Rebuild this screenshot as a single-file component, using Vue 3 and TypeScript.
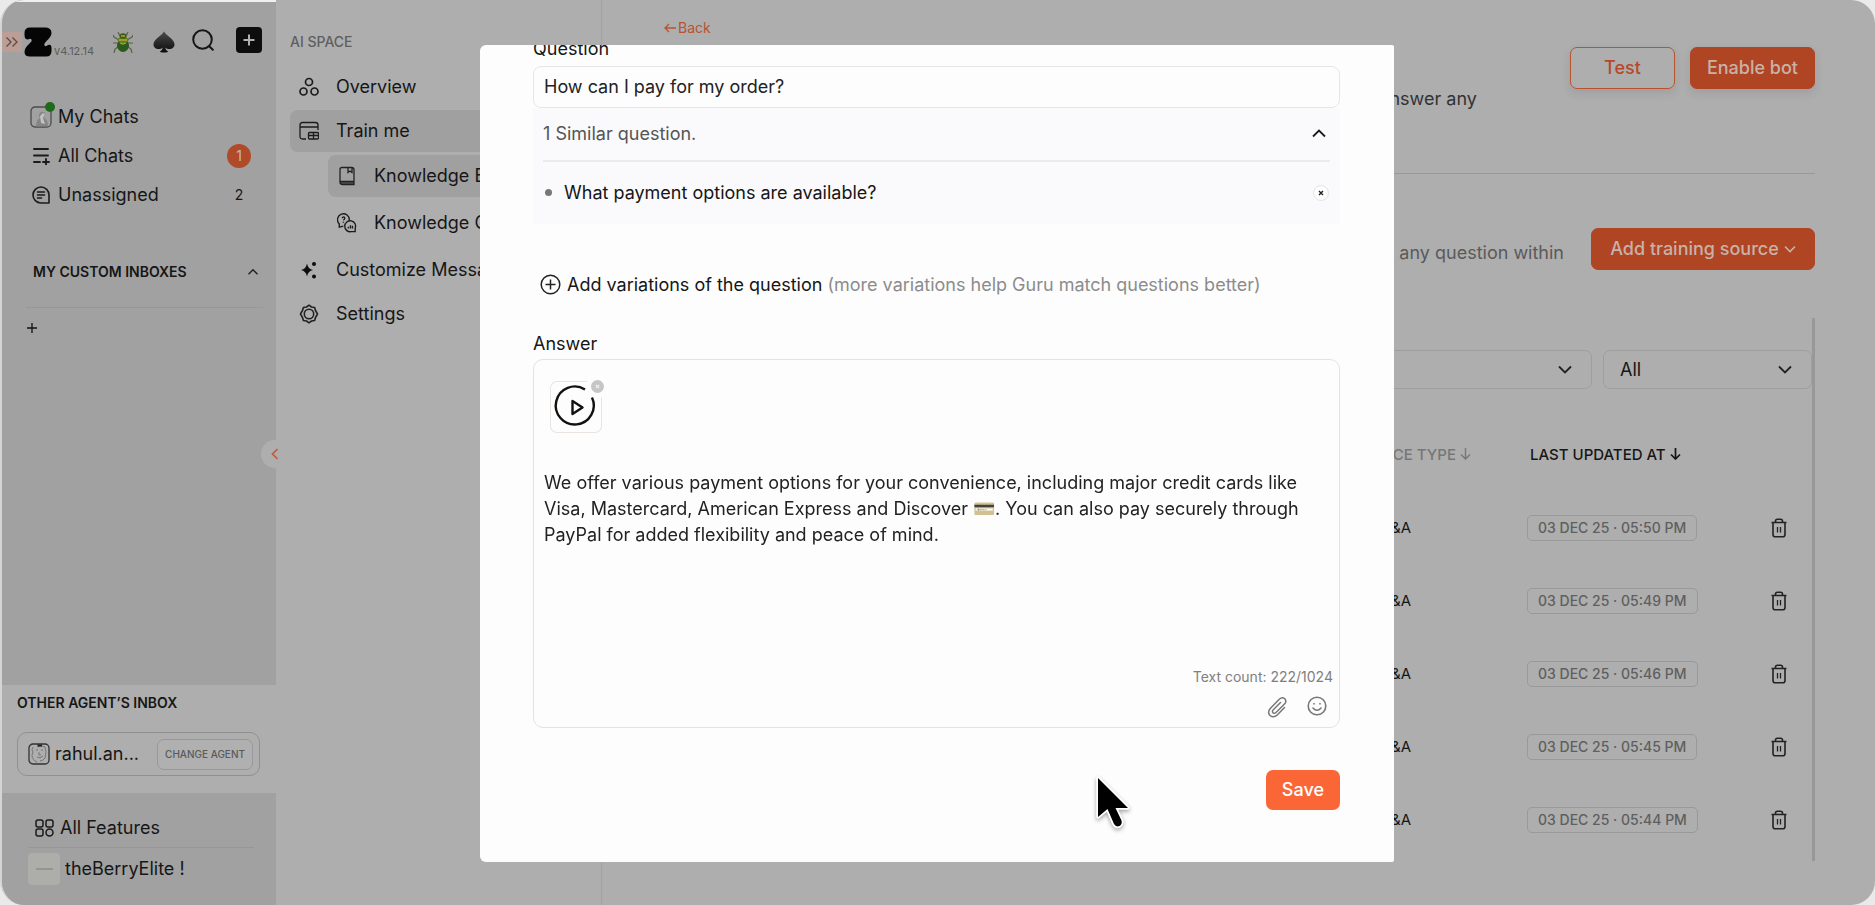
<script setup lang="ts">
import { ref } from 'vue'

const question = ref('How can I pay for my order?')
const answer = ref(
  'We offer various payment options for your convenience, including major credit cards like Visa, Mastercard, American Express and Discover 💳. You can also pay securely through PayPal for added flexibility and peace of mind.'
)
const rows: string[] = ['05:50', '05:49', '05:46', '05:45', '05:44']
</script>

<template>
  <div class="app">
    <aside class="sidebar">
      <header class="brand">
        <button class="expand" aria-label="Expand">
          <svg width="14" height="12" viewBox="0 0 14 12" fill="none" stroke="#5c4a46" stroke-width="1.3"><path d="M1.500 1.500l4.500 4.500-4.500 4.500M7.500 1.500l4.500 4.500-4.500 4.500" /></svg>
        </button>
        <svg class="logo" width="28" height="30" viewBox="0 0 28 30"><path d="M6 0.500H21Q27.500 0.500 27.500 6Q27.500 9.500 22.500 14Q19.500 17 20.500 18.500Q22 20 24 18Q27.500 17 27.500 21V24Q27.500 29.500 22 29.500H6Q0.500 29.500 0.500 25Q0.500 21 5 17Q8.500 14 7.500 12.500Q6 11 4 12.500Q0.500 12.500 0.500 8V6Q0.500 0.500 6 0.500Z" fill="#050505" /></svg>
        <span class="version">v4.12.14</span>
        <svg class="bug" width="20" height="22" viewBox="0 0 20 22">
          <path d="M7 5L5 1M13 5l2-4M6 9L1 6L0 4M14 9l5-3 1-2M5 12H0M15 12h5M6 15l-4 3-1 4M14 15l4 3 1 4" fill="none" stroke="#59604a" stroke-width="1.200" />
          <ellipse cx="10" cy="14.500" rx="6" ry="6.500" fill="#2b5a1d" />
          <ellipse cx="10" cy="9" rx="5.500" ry="3.200" fill="#5f7f23" />
          <ellipse cx="10" cy="5" rx="3.500" ry="2.700" fill="#3d5a18" />
          <path d="M6 9h8M8 5h4M7 12l3 1 3-1" stroke="#b3a52c" stroke-width="1.300" fill="none" />
        </svg>
        <svg class="spade" width="22" height="22" viewBox="0 0 22 22">
          <defs><linearGradient id="sp" x1="0" y1="0" x2="0" y2="1"><stop offset="0" stop-color="#4a4a4a" /><stop offset="1" stop-color="#0c0c0c" /></linearGradient></defs>
          <path d="M11 0.500C13 4.500 21.500 8 21.500 13.500C21.500 18 15.500 19.500 12.200 16.500Q12.500 19 15 20.500Q15 21.500 11 21.500Q7 21.500 7 20.500Q9.500 19 9.800 16.500C6.500 19.500 0.500 18 0.500 13.500C0.500 8 9 4.500 11 0.500Z" fill="url(#sp)" />
        </svg>
        <button class="bare search" aria-label="Search">
          <svg width="22" height="22" viewBox="0 0 22 22" fill="none" stroke="#161616" stroke-width="2" stroke-linecap="round"><circle cx="10.500" cy="10.500" r="9.300" /><path d="M17.500 17.500l3.300 3.300" /></svg>
        </button>
        <button class="add" aria-label="New">
          <svg width="12" height="12" viewBox="0 0 12 12" stroke="#b0b0b0" stroke-width="2"><path d="M6 0.500v11M0.500 6h11" /></svg>
        </button>
      </header>

      <nav class="chats">
        <a href="#" class="chat">
          <span class="avatar">
            <svg width="22" height="22" viewBox="0 0 22 22"><rect x="1" y="1" width="20" height="20" rx="4" fill="none" stroke="#4c4c4c" stroke-width="1.300" /><path d="M6 20.500Q6 13 10 12Q7.500 8 11 6Q14 5 15.500 7.500L14 12Q18 13 18 20.500Z" fill="#858585" /><path d="M10 10l3-3 2 1-2 4 2 6-4-1z" fill="#c2c2c2" /></svg>
            <i class="online"></i>
          </span>
          My Chats
        </a>
        <a href="#" class="chat">
          <svg width="22" height="18" viewBox="0 0 22 18" fill="none" stroke="#1b1b1b" stroke-width="1.900" stroke-linecap="round"><path d="M4 2h14M4 8.500h14M4 15h6M13 15h6M16 12v6" /></svg>
          All Chats
          <span class="badge">1</span>
        </a>
        <a href="#" class="chat">
          <svg width="22" height="20" viewBox="0 0 22 20" fill="none" stroke="#1b1b1b" stroke-width="1.600" stroke-linecap="round" stroke-linejoin="round"><path d="M19 18H11A8 8 0 1 1 19 10V18ZM7.500 7h7M7.500 10h7M7.500 13h4" /></svg>
          Unassigned
          <span class="count">2</span>
        </a>
      </nav>

      <section class="custom">
        <button class="bare custom-head">
          MY CUSTOM INBOXES
          <svg width="12" height="8" viewBox="0 0 12 8" fill="none" stroke="#222" stroke-width="1.400"><path d="M1.500 6.200L6 1.700l4.500 4.500" /></svg>
        </button>
        <button class="bare plus" aria-label="Add inbox">
          <svg width="12" height="12" viewBox="0 0 12 12" stroke="#111" stroke-width="1.300"><path d="M6 1v10M1 6h10" /></svg>
        </button>
      </section>

      <button class="collapse" aria-label="Collapse">
        <svg width="8" height="12" viewBox="0 0 8 12" fill="none" stroke="#c4593a" stroke-width="1.700"><path d="M6.500 1L1.500 6l5 5" /></svg>
      </button>

      <section class="other">
        <h2>OTHER AGENT’S INBOX</h2>
        <div class="agent">
          <svg width="22" height="22" viewBox="0 0 22 22" fill="none" stroke="#333"><rect x="1" y="1" width="20" height="20" rx="4" stroke-width="1.300" /><path d="M5 4Q3 7 5 9L4 12Q4 17 9 19M9 4Q13 2 17 4Q19 9 17 15Q15 18 12 18M8 7h2M13 7h2M9 14Q12 16 15 13M11 9v3h2" stroke="#777" /><path d="M9 1.500h5v2H10z" fill="#222" stroke="none" /></svg>
          <span class="agent-name">rahul.an...</span>
          <button class="change">CHANGE AGENT</button>
        </div>
      </section>

      <section class="foot">
        <a href="#" class="feature">
          <svg width="19" height="18" viewBox="0 0 19 18" fill="none" stroke="#1b1b1b" stroke-width="1.500"><rect x="1" y="1" width="7" height="7" rx="2" /><rect x="11" y="1" width="7" height="7" rx="2" /><rect x="1" y="10" width="7" height="7" rx="2" /><circle cx="14.500" cy="13.500" r="3.500" /></svg>
          All Features
        </a>
        <a href="#" class="account"><span class="thumb"><i></i></span>theBerryElite !</a>
      </section>
    </aside>

    <nav class="space">
      <h2>AI SPACE</h2>
      <a href="#" class="item">
        <svg width="20" height="20" viewBox="0 0 20 20" fill="none" stroke="#1b1b1b" stroke-width="1.700"><circle cx="10" cy="5" r="3.500" /><circle cx="4.500" cy="14.500" r="3.500" /><circle cx="15.500" cy="14.500" r="3.500" /></svg>
        Overview
      </a>
      <a href="#" class="item on">
        <svg width="20" height="20" viewBox="0 0 20 20" fill="none" stroke="#1b1b1b" stroke-width="1.300"><path d="M7 18H3.500Q1 18 1 15.500V4Q1 1.500 3.500 1.500H16.500Q19 1.500 19 4V9M1 6h18" /><rect x="9.500" y="11.500" width="10" height="6.500" rx="1" /><path d="M14.500 11v7M9.500 14.500h10" /></svg>
        Train me
      </a>
      <div class="sub">
        <a href="#" class="item on">
          <svg width="20" height="20" viewBox="0 0 20 20" fill="none" stroke="#222" stroke-width="1.300"><path d="M5 1.500h9.500Q17 1.500 17 4v14.500H5.500Q3 18.500 3 16V3.500Q3 1.500 5 1.500ZM3 15.500h14M11 1.500v5l2-1.500 2 1.500v-5" /><path d="M3 17h14" /></svg>
          Knowledge Base
        </a>
        <a href="#" class="item">
          <svg width="20" height="20" viewBox="0 0 22 22" fill="none" stroke="#1b1b1b" stroke-width="1.500"><path d="M13.500 8A6.500 6.500 0 1 0 2.500 12V15.500L7 14.500" /><path d="M5.500 5.500Q8 3 8.500 5.500Q8.500 7 7 8M7 9.500v1.200" /><path d="M20 20.500V17A6 6 0 1 0 15.500 20.500Z" /><path d="M12.500 17v-2M14.800 17v-3.500M17 17v-3" /></svg>
          Knowledge Gap
        </a>
      </div>
      <a href="#" class="item">
        <svg width="20" height="20" viewBox="0 0 20 20" fill="#0d0d0d"><path d="M8 3.500Q9 9 14 10Q9 11 8 16.500Q7 11 2 10Q7 9 8 3.500Z" /><circle cx="15" cy="4" r="2" /><circle cx="15" cy="16.500" r="2" /></svg>
        Customize Messages
      </a>
      <a href="#" class="item">
        <svg width="20" height="20" viewBox="0 0 20 20" fill="none" stroke="#222" stroke-width="1.600" stroke-linejoin="round"><path d="M7.500 3L10 1.200 12.500 3 15.600 3.500 16.500 6.500 18.500 10 16.500 13.500 15.600 16.500 12.500 17 10 18.800 7.500 17 4.400 16.500 3.500 13.500 1.500 10 3.500 6.500 4.400 3.500Z" /><circle cx="10" cy="10" r="4.700" /></svg>
        Settings
      </a>
    </nav>

    <main class="main">
      <a href="#" class="back"><svg width="12" height="10" viewBox="0 0 12 10" fill="none" stroke="#b8532f" stroke-width="1.300"><path d="M5 1L1 5l4 4M1 5h11" /></svg>Back</a>
      <div class="hero">
        <p>answer any</p>
        <div class="actions">
          <button class="btn line">Test</button>
          <button class="btn">Enable bot</button>
        </div>
      </div>
      <div class="train">
        <p>any question within</p>
        <button class="btn">Add training source
          <svg width="12" height="8" viewBox="0 0 12 8" fill="none" stroke="#c9b1a8" stroke-width="1.600"><path d="M1 1.500l5 5 5-5" /></svg>
        </button>
      </div>
      <div class="list">
        <div class="filters">
          <select aria-label="Source"><option></option></select>
          <select aria-label="Status"><option>All</option></select>
          <i class="chev c1"><svg width="14" height="9" viewBox="0 0 14 9" fill="none" stroke="#222" stroke-width="1.800"><path d="M1 1.500l6 6 6-6" /></svg></i>
          <i class="chev c2"><svg width="14" height="9" viewBox="0 0 14 9" fill="none" stroke="#222" stroke-width="1.800"><path d="M1 1.500l6 6 6-6" /></svg></i>
        </div>
        <table>
          <thead>
            <tr>
              <th class="type">SOURCE TYPE <svg width="11" height="12" viewBox="0 0 11 12" fill="none" stroke="currentColor" stroke-width="1.400"><path d="M5.500 0v11M1 6.500L5.500 11 10 6.500" /></svg></th>
              <th class="date">LAST UPDATED AT <svg width="11" height="12" viewBox="0 0 11 12" fill="none" stroke="currentColor" stroke-width="1.700"><path d="M5.500 0v11M1 6.500L5.500 11 10 6.500" /></svg></th>
              <th class="del"></th>
            </tr>
          </thead>
          <tbody>
            <tr v-for="t in rows" :key="t">
              <td class="type">Q&amp;A</td>
              <td class="date"><span class="pill">03 DEC 25 · {{ t }} PM</span></td>
              <td class="del">
                <button class="bare" aria-label="Delete">
                  <svg width="16" height="20" viewBox="0 0 16 20" fill="none" stroke="#222" stroke-width="1.600"><path d="M0.500 4.500h15M4.500 4.500V3Q4.500 1.200 6.500 1.200h3Q11.500 1.200 11.500 3v1.500M2 4.500V16.500Q2 18.800 4.200 18.800h7.600Q14 18.800 14 16.500V4.500" /><path d="M6.500 9v5.500M9.500 9v5.500" stroke-width="1.300" /></svg>
                </button>
              </td>
            </tr>
          </tbody>
        </table>
      </div>
    </main>

    <div class="overlay">
      <div class="modal" role="dialog" aria-label="Question and answer">
        <label class="q-label" for="question">Question</label>
        <input id="question" v-model="question" class="q-input" type="text" />
        <section class="similar">
          <button class="bare similar-head">1 Similar question.
            <svg width="14" height="9" viewBox="0 0 14 9" fill="none" stroke="#1c1c1c" stroke-width="1.800"><path d="M1 7.500l6-6 6 6" /></svg>
          </button>
          <ul>
            <li>
              <span>What payment options are available?</span>
              <button class="remove" aria-label="Remove"><svg width="6" height="6" viewBox="0 0 6 6" stroke="#222" stroke-width="1.400"><path d="M1 1l4 4M5 1L1 5" /></svg></button>
            </li>
          </ul>
        </section>
        <button class="bare variations">
          <svg width="21" height="21" viewBox="0 0 21 21" fill="none" stroke="#222" stroke-width="1.500"><circle cx="10.500" cy="10.500" r="9.300" /><path d="M10.500 5.500v10M5.500 10.500h10" /></svg>
          <span>Add variations of the question <em>(more variations help Guru match questions better)</em></span>
        </button>
        <label class="a-label" for="answer">Answer</label>
        <div class="editor">
          <div class="attachment">
            <svg width="52" height="52" viewBox="0 0 52 52" fill="none" stroke="#111" stroke-width="2.400"><path d="M35 8.500A19 19 0 1 0 42 16.500" /><path d="M22.500 20v13l10-6.500z" stroke-linejoin="round" /></svg>
            <button class="detach" aria-label="Remove attachment"><svg width="5" height="5" viewBox="0 0 6 6" stroke="#f2f2f2" stroke-width="1.300"><path d="M1 1l4 4M5 1L1 5" /></svg></button>
          </div>
          <textarea id="answer" v-model="answer" rows="6"></textarea>
          <p class="counter">Text count: 222/1024</p>
          <div class="tools">
            <button class="bare" aria-label="Attach file"><svg width="20" height="22" viewBox="0 0 20 22" fill="none" stroke="#777" stroke-width="1.500" stroke-linecap="round"><path d="M17.500 11.500L10.500 18.800Q6.500 22.500 3 19.500Q0 16 3.500 12.200L12.500 3Q15.300 0.500 17.800 2.800Q20 5.300 17.500 8L9 16.500Q7.300 18 6 16.700Q4.700 15.300 6.300 13.700L13.500 6.500" /></svg></button>
            <button class="bare smile" aria-label="Insert emoji"><svg width="20" height="20" viewBox="0 0 20 20" fill="none" stroke="#777" stroke-width="1.600" stroke-linecap="round"><circle cx="10" cy="10" r="8.800" /><path d="M6 12Q10 16.500 14 12M7 7.500v0.500M13 7.500v0.500" /></svg></button>
          </div>
        </div>
        <button class="save">Save</button>
        <svg class="cursor" width="38" height="60" viewBox="0 0 38 60"><path d="M4 4V43L13.500 35L20 50Q22 53.500 25.500 52Q28.500 50 27.500 46.500L21.500 34H34Z" fill="#000" stroke="#fff" stroke-width="3.500" stroke-linejoin="round" paint-order="stroke" /></svg>
      </div>
    </div>
  </div>
</template>

<style>
body {
  background: #eaeaea;
}
</style>

<style scoped>
* {
  box-sizing: border-box;
}
.app {
  position: relative;
  display: flex;
  min-height: 100vh;
  overflow: hidden;
  background: #aeaeae;
  border-left: 2px solid #d4d4d4;
  border-radius: 24px;
  font-family: Inter, "Liberation Sans", sans-serif;
  font-size: 18px;
  line-height: 26px;
  color: #161616;
}
a {
  color: inherit;
  text-decoration: none;
}
button {
  font: inherit;
  color: inherit;
  cursor: pointer;
}
h2,
p,
ul {
  margin: 0;
  padding: 0;
}
svg {
  flex: none;
}
.bare {
  display: flex;
  align-items: center;
  padding: 0;
  border: 0;
  background: none;
}

.sidebar {
  position: relative;
  display: flex;
  flex: none;
  flex-direction: column;
  width: 274px;
  background: #a1a1a1;
  border-top: 2px solid #f0f0f0;
}
.brand {
  display: flex;
  align-items: center;
  height: 30px;
  margin-top: 25px;
}
.expand {
  display: flex;
  align-items: center;
  justify-content: center;
  width: 20px;
  height: 20px;
  padding: 0;
  border: 0;
  background: #bb9f97;
}
.logo {
  margin-left: 2px;
}
.version {
  align-self: flex-end;
  margin-left: 2px;
  font-size: 11px;
  line-height: 12px;
  color: #5c5c5c;
}
.bug {
  margin-left: auto;
}
.spade {
  margin-left: 20px;
}
.search {
  margin-left: 17px;
}
.add {
  display: flex;
  align-items: center;
  justify-content: center;
  width: 26px;
  height: 26px;
  margin: 0 14px 0 22px;
  padding: 0;
  border: 0;
  border-radius: 4px;
  background: #0d0d0d;
}
.search,
.add {
  margin-bottom: 4px;
}
.chats {
  margin-top: 40px;
}
.chat {
  display: flex;
  align-items: center;
  gap: 6px;
  height: 39px;
  padding: 0 25px 0 28px;
}
.avatar {
  position: relative;
  display: flex;
}
.online {
  position: absolute;
  top: -4px;
  right: -3px;
  width: 10px;
  height: 10px;
  border-radius: 50%;
  background: #1f691b;
}
.badge,
.count {
  width: 24px;
  margin-left: auto;
  font-size: 14px;
  line-height: 24px;
  text-align: center;
}
.badge {
  border-radius: 50%;
  background: #b04a28;
  color: #c9b8b2;
}
.custom {
  display: flex;
  flex-direction: column;
  margin: 27px 13px 0 24px;
}
.custom-head {
  justify-content: space-between;
  padding: 18px 4px 22px 7px;
  border-bottom: 1px solid #979797;
  font-size: 14px;
  font-weight: 600;
}
.plus {
  margin-top: 14px;
}
.collapse {
  position: absolute;
  top: 438px;
  right: -13px;
  z-index: 1;
  display: flex;
  align-items: center;
  justify-content: center;
  width: 28px;
  height: 28px;
  padding: 0;
  border: 0;
  border-radius: 50%;
  background: #aeaeae;
}
.other {
  margin-top: auto;
  padding: 5px 16px 17px 15px;
  background: #aeaeae;
}
h2 {
  font-size: 14px;
  font-weight: 600;
}
.agent {
  display: flex;
  align-items: center;
  height: 44px;
  margin-top: 16px;
  padding: 0 6px 0 10px;
  border: 1px solid #909090;
  border-radius: 10px;
}
.agent-name {
  margin-left: 5px;
}
.change {
  height: 31px;
  margin-left: auto;
  padding: 0 7px;
  border: 1px solid #989898;
  border-radius: 7px;
  background: #b0b0b0;
  font-size: 10px;
  font-weight: 500;
  line-height: 16px;
  color: #5a5a5a;
}
.foot {
  padding: 15px 22px 20px 26px;
}
.feature {
  display: flex;
  align-items: center;
  gap: 6px;
  height: 40px;
  padding-left: 7px;
  border-bottom: 1px solid #979797;
}
.account {
  display: flex;
  align-items: center;
  gap: 5px;
  margin-top: 5px;
}
.thumb {
  display: flex;
  align-items: center;
  justify-content: center;
  width: 32px;
  height: 32px;
  border-radius: 4px;
  background: #adadaa;
}
.thumb i {
  width: 17px;
  height: 2px;
  background: #98948a;
}

.space {
  flex: none;
  width: 326px;
  padding: 29px 14px 0;
  border-right: 1px solid #a2a2a2;
}
.space h2 {
  margin-bottom: 11px;
  font-weight: 500;
  color: #5f5f5f;
}
.item {
  display: flex;
  align-items: center;
  gap: 17px;
  height: 42px;
  margin-bottom: 2px;
  padding-left: 9px;
  border-radius: 8px;
  white-space: nowrap;
}
.item.on {
  background: #a0a0a0;
}
.sub {
  margin: 3px 0 5px 38px;
}
.sub .item {
  margin-bottom: 5px;
}

.main {
  flex: 1;
  min-width: 0;
  padding: 15px 60px 44px 62px;
}
.back {
  display: flex;
  align-items: center;
  gap: 2px;
  height: 26px;
  font-size: 14px;
  color: #b8532f;
}
.hero {
  display: flex;
  justify-content: flex-end;
  align-items: flex-start;
  height: 127px;
  margin-top: 6px;
  border-bottom: 1px solid #999;
}
.hero p {
  margin: 39px 93px 0 0;
  color: #333;
}
.actions {
  display: flex;
  gap: 15px;
}
.btn {
  display: flex;
  align-items: center;
  justify-content: center;
  gap: 5px;
  height: 42px;
  padding: 0 16px;
  border: 1px solid #b04523;
  border-radius: 7px;
  background: #b04523;
  font-weight: 500;
  color: #c9b1a8;
  white-space: nowrap;
  box-shadow: 0 4px 8px rgba(80, 60, 80, 0.15);
}
.btn.line {
  min-width: 105px;
  border-color: #b8532f;
  background: none;
  color: #b8482a;
}
.train {
  display: flex;
  justify-content: flex-end;
  margin-top: 54px;
}
.train p {
  margin: 12px 27px 0 0;
  color: #5a5a5a;
}
.train .btn {
  min-width: 224px;
  box-shadow: none;
}
.list {
  margin-top: 48px;
  padding: 32px 0 5px 0;
  border-right: 3px solid #989898;
}
.filters {
  position: relative;
  display: grid;
  grid-template-columns: 1fr 209px;
  gap: 11px;
}
select {
  height: 39px;
  padding: 0 16px;
  border: 1px solid #9e9e9e;
  border-radius: 7px;
  background: none;
  appearance: none;
  font: inherit;
  font-size: 18px;
  color: #161616;
}
.chev {
  position: absolute;
  top: 15px;
  display: flex;
  pointer-events: none;
}
.c1 {
  right: 240px;
}
.c2 {
  right: 20px;
}
table {
  width: 100%;
  margin-top: 30px;
  border-collapse: collapse;
  table-layout: fixed;
}
th,
td {
  padding: 0;
  text-align: left;
  font-weight: 400;
}
th {
  height: 72px;
  font-size: 15px;
  font-weight: 500;
}
td {
  height: 73px;
}
th.type {
  padding-right: 56px;
  color: #777;
}
.type {
  padding-right: 116px;
  font-size: 15px;
  text-align: right;
}
th.date {
  padding-left: 3px;
}
.date {
  width: 228px;
}
.del {
  width: 57px;
}
.pill {
  display: inline-block;
  padding: 0 10px;
  border: 1px solid #999;
  border-radius: 5px;
  font-size: 14px;
  font-weight: 500;
  line-height: 24px;
  color: #5f5f5f;
}
.del .bare {
  margin-left: 16px;
}

.overlay {
  position: absolute;
  inset: 0 1px -1px -2px;
  display: grid;
  place-items: center;
}
.modal {
  position: relative;
  display: flex;
  flex-direction: column;
  width: 914px;
  max-width: 100%;
  padding: 0 54px 52px 53px;
  overflow: hidden;
  border-radius: 6px 2px 2px 6px;
  background: #fdfdfd;
}
.q-label {
  margin-top: -9px;
}
.q-input {
  height: 42px;
  margin-top: 4px;
  padding: 0 10px;
  border: 1px solid #e6e6e6;
  border-radius: 8px;
  background: none;
  font: inherit;
  color: #222;
}
.similar {
  padding: 0 10px;
  background: #fafafc;
}
.similar-head {
  justify-content: space-between;
  width: 100%;
  height: 54px;
  padding-right: 4px;
  border-bottom: 2px solid #ebebea;
  color: #555;
}
.similar ul {
  list-style: none;
}
.similar li {
  display: flex;
  align-items: center;
  height: 62px;
  padding-left: 2px;
}
.similar li::before {
  content: "";
  width: 7px;
  height: 7px;
  margin-right: 12px;
  border-radius: 50%;
  background: #777;
}
.remove {
  display: flex;
  align-items: center;
  justify-content: center;
  width: 16px;
  height: 16px;
  margin: 0 1px 0 auto;
  padding: 0;
  border: 1px solid #e4e4e4;
  border-radius: 50%;
  background: #fdfdfd;
}
.variations {
  gap: 6px;
  margin: 48px 0 0 7px;
  white-space: nowrap;
}
.variations em {
  font-style: normal;
  color: #8c8c8c;
}
.a-label {
  margin-top: 33px;
}
.editor {
  display: flex;
  flex-direction: column;
  margin-top: 2px;
  padding: 21px 7px 9px 10px;
  border: 1px solid #e3e3e3;
  border-radius: 10px;
}
.attachment {
  position: relative;
  display: flex;
  width: 52px;
  height: 52px;
  margin-left: 6px;
  border-radius: 7px;
  box-shadow: inset 0 0 0 1px #e9e4e0;
}
.detach {
  position: absolute;
  top: -1px;
  right: -2px;
  display: flex;
  align-items: center;
  justify-content: center;
  width: 13px;
  height: 13px;
  padding: 0;
  border: 0;
  border-radius: 50%;
  background: #c6c6c6;
  box-shadow: 0 0 0 5px #fdfdfd;
}
textarea {
  height: 182px;
  margin-top: 37px;
  padding: 0;
  border: 0;
  outline: 0;
  background: none;
  resize: none;
  font: inherit;
  color: #222;
  filter: saturate(0.25);
}
.counter {
  margin-top: 12px;
  margin-right: -1px;
  text-align: right;
  font-size: 14px;
  color: #808080;
}
.tools {
  display: flex;
  justify-content: flex-end;
  gap: 20px;
  margin: 6px 5px 0 0;
}
.smile {
  margin-bottom: 2px;
}
.save {
  align-self: flex-end;
  height: 40px;
  margin-top: 42px;
  padding: 0 16px;
  border: 0;
  border-radius: 7px;
  background: #fb6637;
  font-weight: 500;
  color: #fff;
}
.cursor {
  position: absolute;
  left: 614px;
  bottom: 28px;
  filter: drop-shadow(0 2px 2px rgba(0, 0, 0, 0.35));
}
</style>
